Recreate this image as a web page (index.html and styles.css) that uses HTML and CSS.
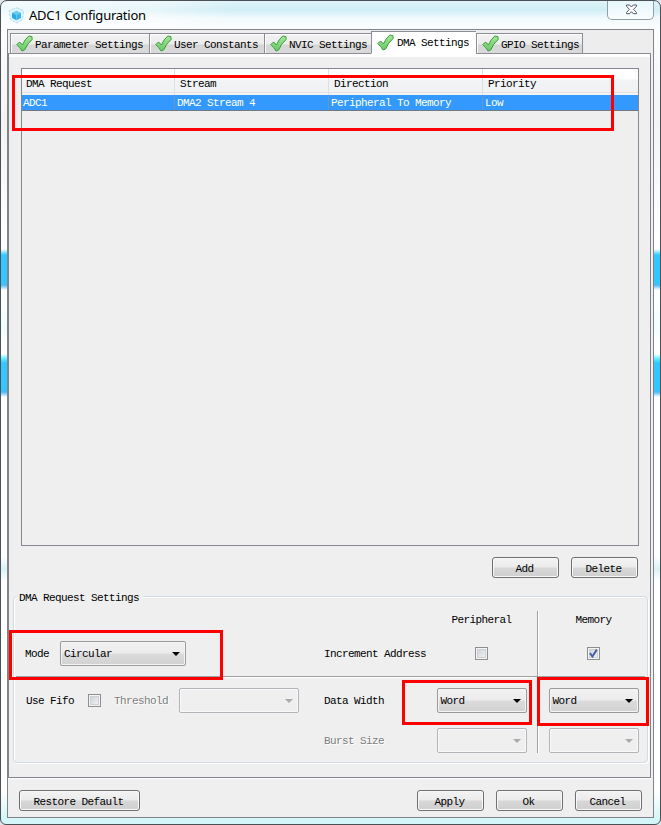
FILE: index.html
```html
<!DOCTYPE html>
<html lang="en">
<head>
<meta charset="utf-8">
<title>ADC1 Configuration</title>
<link rel="stylesheet" href="styles.css">
</head>
<body>
<svg class="defs" width="0" height="0" aria-hidden="true">
  <defs>
    <linearGradient id="leaf" x1="0" y1="0" x2="0" y2="1"><stop offset="0" stop-color="#a6e59a"/><stop offset="1" stop-color="#66c962"/></linearGradient>
    <symbol id="tick" viewBox="0 0 17 17"><path d="M.8 9.6 3.2 7.2Q5.2 7.8 6.4 10 8.8 4.2 12.8 1L15.9 1.6 16.2 4.4Q11 9 8.6 15L6 16Q4 12.4 .8 9.6Z" fill="url(#leaf)" stroke="#3d9c3d" stroke-width="1" stroke-linejoin="round"/></symbol>
  </defs>
</svg>
<div class="window">
  <header class="titlebar">
    <svg class="app-icon" width="17" height="17" viewBox="0 0 17 17"><path d="M8.5 .8 15.6 3.6 14.6 12.4 8.5 16 2.4 12.4 1.4 3.6Z" fill="#e0f5fd" stroke="#a5dff5" stroke-dasharray="3 1.2"/><path d="M8.5 3.8 13 5.8 8.5 8 4 5.8Z" fill="#69cdf2"/><path d="M4 5.8 8.5 8V13.2L4 11Z" fill="#27a9e1"/><path d="M13 5.8 8.5 8V13.2L13 11Z" fill="#3bb4e8"/></svg>
    <h1>ADC1 Configuration</h1>
    <div class="close"><svg width="13" height="11" viewBox="0 0 13 11"><path d="M1.5 1H4.7L6.5 3 8.3 1H11.5V2.2L8.6 5.3 11.5 8.5V9.7H8.3L6.5 7.7 4.7 9.7H1.5V8.5L4.4 5.3 1.5 2.2Z" fill="#fff" stroke="#535666"/></svg></div>
  </header>
  <main class="client">
    <nav class="tabs">
      <div class="tab t1"><svg><use href="#tick"/></svg><span>Parameter Settings</span></div>
      <div class="tab t2"><svg><use href="#tick"/></svg><span>User Constants</span></div>
      <div class="tab t3"><svg><use href="#tick"/></svg><span>NVIC Settings</span></div>
      <div class="tab t4 active"><svg><use href="#tick"/></svg><span>DMA Settings</span></div>
      <div class="tab t5"><svg><use href="#tick"/></svg><span>GPIO Settings</span></div>
    </nav>
    <section class="panel">
      <div class="table">
        <div class="row head"><span>DMA Request</span><span>Stream</span><span>Direction</span><span>Priority</span></div>
        <div class="row selected"><span>ADC1</span><span>DMA2 Stream 4</span><span>Peripheral To Memory</span><span>Low</span></div>
      </div>
      <div class="actions"><div class="button">Add</div><div class="button">Delete</div></div>
      <div class="group">
        <div class="legend">DMA Request Settings</div>
        <div class="settings">
          <div class="rule-v"></div>
          <div class="rule-h"></div>
          <span class="peri r1">Peripheral</span><span class="mem r1">Memory</span>
          <div class="left r2"><span class="mode-label">Mode</span><div class="combo mode">Circular</div></div>
          <span class="name r2">Increment Address</span>
          <div class="peri r2"><i class="check"></i></div>
          <div class="mem r2"><i class="check"><svg width="11" height="11" viewBox="0 0 11 11"><path d="M2 5.2 4.4 8.5 8.8 1.6" fill="none" stroke="#4761a8" stroke-width="2"/></svg></i></div>
          <div class="left r4"><span class="fifo-label">Use Fifo</span><i class="check"></i><span class="threshold dim">Threshold</span><div class="combo off level"></div></div>
          <span class="name r4">Data Width</span>
          <div class="peri r4"><div class="combo">Word</div></div>
          <div class="mem r4"><div class="combo">Word</div></div>
          <span class="name r5 dim">Burst Size</span>
          <div class="peri r5"><div class="combo off"></div></div>
          <div class="mem r5"><div class="combo off"></div></div>
        </div>
      </div>
    </section>
    <footer class="footer"><div class="button wide">Restore Default</div><div class="button">Apply</div><div class="button">Ok</div><div class="button">Cancel</div></footer>
  </main>
  <div class="mark mark-table"></div>
  <div class="mark mark-mode"></div>
  <div class="mark mark-peri"></div>
  <div class="mark mark-mem"></div>
</div>
</body>
</html>
```
FILE: styles.css
```css
* { box-sizing: border-box; }
body { margin: 0; background: #dfe5e8; font: 11px/14px "Liberation Mono", monospace; letter-spacing: -0.6px; color: #000; overflow: hidden; }
.defs { position: absolute; }
.window {
  position: relative; width: 661px; height: 825px; padding: 0 6px; overflow: hidden;
  border: 1px solid #4b5055; border-radius: 7px 7px 6px 6px;
  background:
    linear-gradient(90deg, rgba(255,255,255,.65) 0, rgba(255,255,255,.5) 150px, rgba(255,255,255,0) 230px, rgba(255,255,255,0)) 0 0 / 100% 29px no-repeat,
    linear-gradient(#dff3f8 0, #cfeef6 9px, #f1fafc 17px, rgba(255,255,255,0) 29px) no-repeat,
    linear-gradient(#fff 0, #f4f4f4 120px, #fff 245px, #fff 248px, #30c8ff 254px, #30c8ff 281px, #4abaf5 284px, #fff 289px, #effdff 328px, #fff 340px, #fff 353px, #6ef2ff 357px, #30c8ff 362px, #30c8ff 388px, #4abaf5 391px, #fff 396px, #fff 555px, #d9f2f7 568px, #fff 580px, #fff 790px, #d4f6f8 818px);
}
.titlebar { display: flex; align-items: flex-start; height: 28px; padding-left: 1px; }
.app-icon { margin-top: 6px; flex: none; }
h1 { margin: 4px 0 0 4px; font: 13px/20px "Noto Sans", sans-serif; letter-spacing: -0.24px; white-space: nowrap; }
.close { width: 47px; height: 19px; margin: 0 0 0 auto; padding: 3px 0 0 17px; border: 1px solid #929da4; border-top: 0; border-radius: 0 0 5px 5px; background: linear-gradient(#e6f7fb, #fafdfe); }
.close svg { display: block; }
.client { height: 789px; border: 1px solid #80838a; background: #efefef; display: flex; flex-direction: column; }
.tabs { display: flex; align-items: flex-end; height: 24px; margin-right: 2px; padding-left: 2px; background: linear-gradient(#8a8d96, #8a8d96) 0 100% / 100% 1px no-repeat #ededed; flex: none; }
.tab { display: flex; align-items: center; height: 21px; border: 1px solid #8a8d96; border-right: 0; background: linear-gradient(#f2f2f2 0, #ececec 10px, #d5d5d5 11px, #dadada 100%); box-shadow: inset 1px 1px #fff; padding-left: 5px; white-space: nowrap; }
.tab svg { width: 17px; height: 17px; flex: none; margin-right: 2px; }
.tab span { padding-top: 3px; }
.t1 { width: 139px; } .t2 { width: 115px; } .t3 { width: 107px; } .t4 { width: 105px; } .t5 { width: 107px; border-right: 1px solid #8a8d96; }
.tab.active { height: 23px; margin-top: 1px; background: #fff; border-bottom-color: #fff; }
.tab.active span { padding: 1px 0 0 1px; }
.panel { height: 724px; margin-right: 2px; padding: 14px 3px 0 4px; border: 1px solid #80838a; border-width: 0 1px 1px; box-shadow: inset 0 3px #fff, 0 1px #fff; flex: none; }
.table { width: 618px; height: 478px; margin-left: 8px; border: 1px solid #828790; }
.row { display: grid; grid-template-columns: 153px 154px 154px 155px; }
.head { height: 26px; border-bottom: 2px solid #f3f3f3; background: linear-gradient(#fff 0, #fff 10px, #f2f3f5 11px, #f0f1f3 23px, #d5d5d5 24px); line-height: 30px; }
.head span { padding-left: 4px; border-right: 1px solid #dedfe1; }
.selected { height: 16px; background: #3399ff; border-bottom: 1px solid #707983; color: #fff; line-height: 17px; }
.selected span { height: 15px; padding-left: 1px; border-right: 1px solid #6e94bd; white-space: nowrap; }
.row span:nth-child(n+2) { padding-left: 5px; }
.selected span:nth-child(n+2) { padding-left: 2px; }
.row span:last-child { border-right: 0; }
.actions { display: flex; justify-content: flex-end; gap: 12px; padding: 11px 9px 0 0; }
.button { width: 67px; height: 21px; padding-right: 2px; border: 1px solid #707070; border-radius: 3px; background: linear-gradient(#f3f3f3 0, #ebebeb 9px, #d8d8d8 10px, #cfcfcf 100%); box-shadow: inset 0 0 0 1px #f8f8f8; text-align: center; line-height: 22px; }
.group { width: 635px; height: 167px; margin-top: 18px; border: 1px solid #d3dce4; border-radius: 4px; box-shadow: inset 1px 1px #fff, 1px 1px #fff; }
.legend { width: 126px; height: 14px; margin: -7px 0 7px 3px; padding: 1px 0 0 2px; background: #efefef; }
.settings { display: grid; grid-template-columns: 310px 99px 114px 109px; grid-template-rows: 18px 12px 25px 10px 2px 10px 25px 15px 25px; }
.r1 { grid-row: 1; } .r2 { grid-row: 3; } .r4 { grid-row: 7; } .r5 { grid-row: 9; }
.left { grid-column: 1; } .name { grid-column: 2; } .peri { grid-column: 3; } .mem { grid-column: 4; }
.settings > * { white-space: nowrap; }
.name { line-height: 27px; }
.peri, .mem { display: flex; justify-content: center; align-items: center; }
.peri { padding-left: 3px; }
.mem { padding-left: 4px; }
.rule-v { grid-column: 4; grid-row: 1 / -1; width: 2px; background: #a0a0a0; border-right: 1px solid #fff; }
.rule-h { grid-column: 1 / -1; grid-row: 5; margin: 0 1px 0 2px; background: #a0a0a0; border-bottom: 1px solid #fff; }
.left { display: flex; align-items: center; }
.mode-label { width: 35px; margin-left: 11px; padding-top: 1px; }
.fifo-label { width: 62px; margin-left: 12px; padding-top: 1px; }
.threshold { width: 65px; margin-left: 13px; padding-top: 1px; }
.dim { color: #7e7e7e; text-shadow: 1px 1px #fff; }
.combo { position: relative; width: 90px; height: 25px; padding-left: 3px; border: 1px solid #9a9a9a; border-radius: 2px; background: linear-gradient(#f2f2f2 0, #ececec 11px, #dbdbdb 12px, #d2d2d2 100%); box-shadow: inset 0 0 0 1px #f5f5f5; line-height: 25px; }
.combo::after { content: ""; position: absolute; right: 5px; top: 10px; border: 4px solid transparent; border-top-color: #000; border-bottom: 0; }
.combo.mode { width: 126px; }
.combo.level { width: 120px; }
.combo.off { background: #efefef; border-color: #b2b4ba; box-shadow: inset 0 0 0 1px #fafafa; }
.combo.off::after { border-top-color: #aaa; }
.check { width: 13px; height: 13px; border: 1px solid #8e8f8f; background: linear-gradient(135deg, #c6cbd2, #f8f8f8); box-shadow: inset 0 0 0 1px #f4f4f4, inset 0 0 0 2px #cdd1d5; flex: none; }
.check svg { display: block; }
.footer { display: flex; gap: 12px; padding: 12px 11px 0 11px; }
.footer .wide { width: 121px; margin-right: auto; }
.mark { position: absolute; border: 3px solid #f00; }
.mark-table { left: 11px; top: 74px; width: 602px; height: 56px; }
.mark-mode { left: 8px; top: 629px; width: 214px; height: 50px; }
.mark-peri { left: 401px; top: 679px; width: 130px; height: 45px; }
.mark-mem { left: 536px; top: 676px; width: 112px; height: 49px; }
```
